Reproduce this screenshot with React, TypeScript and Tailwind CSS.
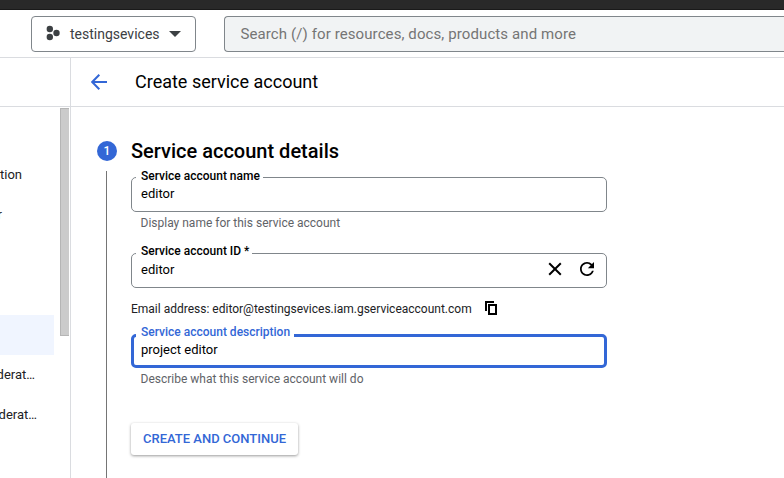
import type { ReactNode } from "react";

type FieldProps = {
  label: string;
  value: string;
  focused?: boolean;
  labelClass: string;
  className: string;
  children?: ReactNode;
};

function Field({ label, value, focused, labelClass, className, children }: FieldProps) {
  return (
    <div
      className={`relative flex w-[476px] rounded-[5px] pb-[2px] ${
        focused ? "border-[3px] border-[#3367d6] pl-[7px]" : "border border-[#80868b] pl-[9px]"
      } ${className}`}
    >
      <span
        className={`absolute flex h-4 items-center bg-white pl-[5px] text-[12px] leading-4 font-medium whitespace-nowrap ${
          focused ? "left-[2px] text-[#3367d6]" : "left-[4px] text-black"
        } ${labelClass}`}
      >
        {label}
      </span>
      <span className="flex flex-1 items-center text-[13px] leading-4 text-black">{value}</span>
      {children}
    </div>
  );
}

function Sidebar() {
  return (
    <aside className="flex w-[71px] shrink-0 flex-col border-r border-[#dadce0] text-[13px] leading-5 text-[#202124]">
      <div className="h-[49px] shrink-0 border-b border-[#dadce0]" />
      <div className="flex flex-1 justify-between pt-px pr-px">
        <nav className="flex w-[54px] flex-col overflow-hidden whitespace-nowrap">
          <div className="mt-[47px] flex h-10 items-center justify-end pr-[32px]">Information</div>
          <div className="flex h-10 items-center justify-end pr-[52px]">r</div>
          <div className="mt-[80px] h-10 bg-[#f0f5ff]" />
          <div className="flex h-10 items-center justify-end pr-[19px]">Workload Identity Federat…</div>
          <div className="flex h-10 items-center justify-end pr-[17px]">Workforce Identity Federat…</div>
        </nav>
        <div className="h-[228px] w-[9px] border border-r-0 border-[#b5b5b5] bg-[#cbcbcb]" />
      </div>
    </aside>
  );
}

export default function App() {
  return (
    <div className="flex h-[478px] w-[784px] flex-col overflow-hidden bg-white font-['Roboto',sans-serif]">
      <div className="h-[10px] shrink-0 border-b border-[#1a1a1a] bg-[#292929]" />
      <header className="flex h-12 shrink-0 border-b border-[#dadce0] pt-[6px] pl-[31px]">
        <button className="flex h-9 w-[165px] shrink-0 items-center rounded-[4px] border border-[#80868b] pl-[14px] text-[14px] text-[#3c4043]">
          <svg width="14" height="16" viewBox="0 0 14 16" fill="#3c4043" className="mb-[2px] shrink-0">
            <circle cx="3.8" cy="4" r="3.2" />
            <circle cx="3.8" cy="12" r="3.2" />
            <circle cx="10.5" cy="8" r="3.2" />
          </svg>
          <span className="ml-[10px]">testingsevices</span>
          <svg width="12" height="6" viewBox="0 0 12 6" fill="#3c4043" className="ml-[9px]">
            <path d="M0 0h12L6 6z" />
          </svg>
        </button>
        <div className="ml-7 flex h-9 flex-1 items-center rounded-l-[4px] border border-r-0 border-[#80868b] bg-[#f1f3f4] pl-[15.5px] text-[15px] tracking-[0.1px] text-[#757575]">
          Search (/) for resources, docs, products and more
        </div>
      </header>
      <div className="flex flex-1">
        <Sidebar />
        <main className="flex flex-1 flex-col">
          <div className="flex h-[49px] shrink-0 items-center border-b border-[#dadce0] pl-5">
            <svg width="16" height="16" viewBox="0 0 16 16" fill="none" stroke="#3367d6" strokeWidth="2">
              <path d="M16 8H1.5M8.3 .8L1.2 8l7.1 7.2" />
            </svg>
            <h1 className="mb-[2px] ml-7 text-[18px] text-black">Create service account</h1>
          </div>
          <div className="flex flex-1 pl-[26px]">
            <div className="flex w-5 shrink-0 flex-col items-center pt-[34px]">
              <div className="flex size-5 shrink-0 items-center justify-center rounded-full bg-[#3367d6] text-[12px] font-medium text-white">
                1
              </div>
              <div className="mt-[10px] mr-px w-px flex-1 bg-[#757575]" />
            </div>
            <form className="ml-[14px] flex w-[476px] flex-col items-start text-[12px] leading-4">
              <h2 className="mt-8 h-6 text-[20px] leading-6 font-medium text-black">Service account details</h2>
              <Field label="Service account name" value="editor" labelClass="w-[127px] -top-[10px]" className="mt-[14px] h-[35px]" />
              <p className="mt-[3px] pl-[9.5px] text-[#5f6368]">Display name for this service account</p>
              <Field label="Service account ID *" value="editor" labelClass="w-[116px] -top-[11px]" className="mt-[22px] h-[35px]">
                <div className="flex items-center gap-[18px] pr-3">
                  <svg width="14" height="14" viewBox="0 0 14 14" fill="none" stroke="#000" strokeWidth="2" className="mb-[2px]">
                    <path d="M1.2 1.2l11.6 11.6M12.8 1.2L1.2 12.8" />
                  </svg>
                  <svg width="14" height="14" viewBox="4 4 16 16" fill="#000" className="mb-[2px]">
                    <path d="M17.65 6.35C16.2 4.9 14.21 4 12 4c-4.42 0-7.99 3.58-7.99 8s3.57 8 7.99 8c3.73 0 6.84-2.55 7.73-6h-2.08c-.82 2.33-3.04 4-5.65 4-3.31 0-6-2.69-6-6s2.69-6 6-6c1.66 0 3.14.69 4.22 1.78L13 11h7V4l-2.35 2.35z" />
                  </svg>
                </div>
              </Field>
              <div className="mt-[13px] flex h-4 items-center text-[#202124]">
                <span>Email address: editor@testingsevices.iam.gserviceaccount.com</span>
                <svg width="12" height="14" viewBox="0 0 12 14" fill="none" stroke="#000" strokeWidth="2" className="mb-[2px] ml-[13px]">
                  <path d="M1 10V1h8M4 4h7v9H4z" />
                </svg>
              </div>
              <Field
                label="Service account description"
                value="project editor"
                focused
                labelClass="w-[158px] -top-[13px]"
                className="mt-[17px] h-[34px]"
              />
              <p className="mt-[3px] pl-[9.5px] text-[#5f6368]">Describe what this service account will do</p>
              <button
                type="button"
                className="mt-[36px] flex h-8 w-[167px] items-center justify-center rounded-[3px] bg-white text-[13px] font-medium text-[#3367d6] shadow-[0_1px_3px_rgba(0,0,0,0.4)]"
              >
                CREATE AND CONTINUE
              </button>
            </form>
          </div>
        </main>
      </div>
    </div>
  );
}
